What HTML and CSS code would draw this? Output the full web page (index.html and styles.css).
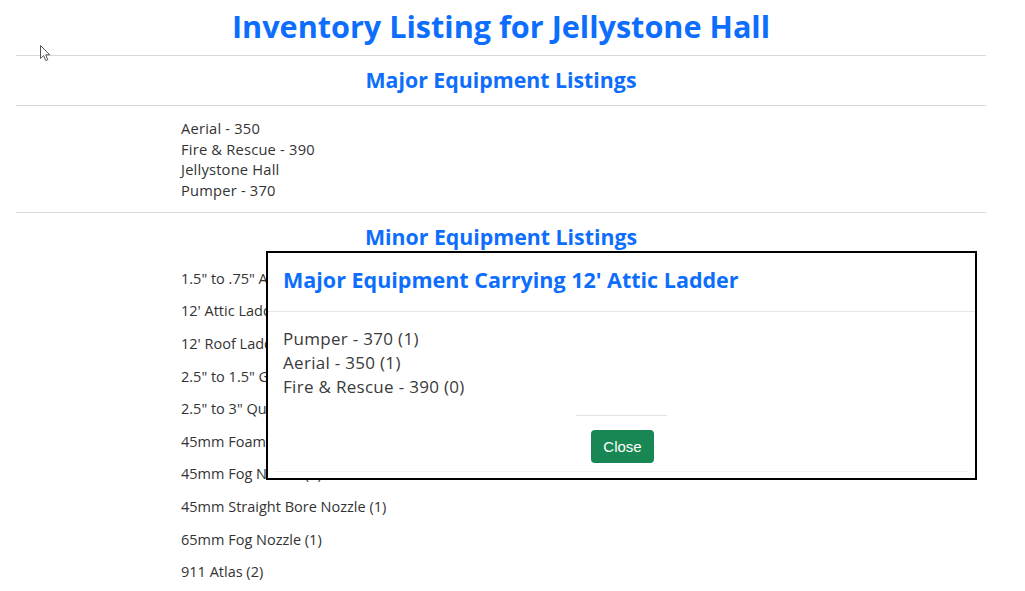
FILE: index.html
```html
<!DOCTYPE html>
<html lang="en">
<head>
<meta charset="utf-8">
<title>Inventory Listing for Jellystone Hall</title>
<link rel="stylesheet" href="styles.css">
</head>
<body>
<div class="page">
  <h1 class="title">Inventory Listing for Jellystone Hall</h1>
  <hr class="rule rule-1">
  <h2 class="section-title">Major Equipment Listings</h2>
  <hr class="rule rule-2">
  <ul class="major-list">
    <li>Aerial - 350</li>
    <li>Fire &amp; Rescue - 390</li>
    <li>Jellystone Hall</li>
    <li>Pumper - 370</li>
  </ul>
  <hr class="rule rule-3">
  <h2 class="section-title">Minor Equipment Listings</h2>
  <ul class="minor-list">
    <li>1.5" to .75" Adapter (2)</li>
    <li>12' Attic Ladder (2)</li>
    <li>12' Roof Ladder (2)</li>
    <li>2.5" to 1.5" Gated Wye (1)</li>
    <li>2.5" to 3" Quick Connect (1)</li>
    <li>45mm Foam Nozzle (1)</li>
    <li>45mm Fog Nozzle (2)</li>
    <li>45mm Straight Bore Nozzle (1)</li>
    <li>65mm Fog Nozzle (1)</li>
    <li>911 Atlas (2)</li>
  </ul>
</div>

<div class="modal">
  <div class="modal-header">
    <h3 class="modal-title">Major Equipment Carrying 12' Attic Ladder</h3>
  </div>
  <div class="modal-body">
    <div>Pumper - 370 (1)</div>
    <div>Aerial - 350 (1)</div>
    <div>Fire &amp; Rescue - 390 (0)</div>
  </div>
  <div class="modal-footer">
    <hr class="footer-rule">
    <button class="btn-close" type="button">Close</button>
  </div>
</div>

<svg class="cursor" width="12" height="18" viewBox="0 0 12 18" aria-hidden="true">
  <path d="M0.5 0.5 L0.5 13.5 L3.6 10.6 L5.8 15.6 L7.8 14.7 L5.7 9.8 L9.8 9.8 Z" fill="#fff" stroke="#555" stroke-width="1" stroke-linejoin="round"/>
</svg>
</body>
</html>
```

FILE: styles.css
```css
html, body {
  margin: 0;
  padding: 0;
  background: #ffffff;
}

body {
  font-family: "Open Sans", "Liberation Sans", sans-serif;
  color: #333333;
  width: 1025px;
  height: 591px;
  overflow: hidden;
  position: relative;
}

.page {
  margin-left: 16px;
  width: 970px;
}

.title {
  margin: 6px 0 0;
  font-size: 30.6px;
  line-height: 40px;
  font-weight: 700;
  color: #0d6efd;
  text-align: center;
}

.rule {
  border: 0;
  border-top: 1px solid #d9d9d9;
  margin: 0;
  height: 0;
}

.rule-1 { margin-top: 9px; }
.rule-2 { margin-top: 10px; }
.rule-3 { margin-top: 11px; }

.section-title {
  margin: 9px 0 0;
  font-size: 21.3px;
  line-height: 30px;
  font-weight: 700;
  color: #0d6efd;
  text-align: center;
}

.major-list,
.minor-list {
  list-style: none;
  margin: 0;
  padding: 0 0 0 165px;
  font-size: 14.7px;
}

.major-list {
  padding-top: 12px;
  line-height: 20.7px;
}

.major-list li {
  letter-spacing: 0.2px;
}

.minor-list {
  padding-top: 11px;
  line-height: 32.6px;
  font-size: 14.5px;
}

.modal {
  position: absolute;
  left: 266px;
  top: 251px;
  width: 711px;
  height: 229px;
  box-sizing: border-box;
  border: 2px solid #000;
  background: #fff;
  display: flex;
  flex-direction: column;
}

.modal-header {
  padding: 12px 15px 16px;
  border-bottom: 1px solid #e6e6e6;
}

.modal-title {
  margin: 0;
  font-size: 21.5px;
  line-height: 30px;
  font-weight: 700;
  color: #0d6efd;
}

.modal-body {
  padding: 15px 15px 0;
  font-size: 17px;
  letter-spacing: 0.3px;
  line-height: 24px;
  color: #3a3a3a;
}

.modal-footer {
  display: flex;
  flex-direction: column;
  align-items: center;
  padding-top: 16px;
  flex: 1;
  border-bottom: 1px solid #f2f2f2;
  margin: 0 6px 6px;
}

.footer-rule {
  border: 0;
  border-top: 1px solid #e3e3e3;
  width: 91px;
  margin: 0 0 14px;
  height: 0;
}

.btn-close {
  font-family: "Liberation Sans", Arial, sans-serif;
  font-size: 15px;
  line-height: 19px;
  color: #fff;
  background: #198754;
  border: 0;
  border-radius: 4px;
  padding: 7px 12px;
  width: 63px;
  height: 33px;
  margin-left: 2px;
}

.cursor {
  position: absolute;
  left: 40px;
  top: 45px;
}
```
